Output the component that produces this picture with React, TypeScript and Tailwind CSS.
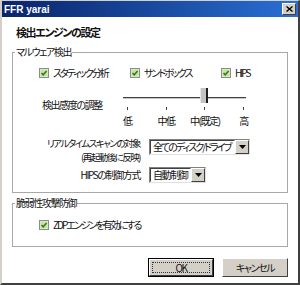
import type { ReactNode } from 'react';

const jp = "font-['Noto_Sans_CJK_JP',sans-serif] [font-feature-settings:'palt']";

function CheckBox() {
  return (
    <svg width="10" height="10" viewBox="0 0 10 10" className="shrink-0">
      <rect x="0.5" y="0.5" width="9" height="9" fill="#e4f2d4" stroke="#8c8c8c" />
      <rect x="1.5" y="1.5" width="7" height="7" fill="#c6e2a4" />
      <path d="M2.5 5 L4.2 6.8 L7.6 3" fill="none" stroke="#2e7a1c" strokeWidth="1.5" />
    </svg>
  );
}

function Check({ label, className = '' }: { label: string; className?: string }) {
  return (
    <div className={`flex items-center gap-[4px] ${className}`}>
      <CheckBox />
      <span className="leading-[12px] whitespace-nowrap tracking-[-2px]">{label}</span>
    </div>
  );
}

function Group({ title, className, children }: { title: string; className: string; children: ReactNode }) {
  return (
    <div className={`relative border border-[#a8a8a8] ${className}`}>
      <span className="absolute left-[2px] top-[-7px] bg-white px-[1px] leading-[12px] whitespace-nowrap">{title}</span>
      {children}
    </div>
  );
}

function Select({ value, className }: { value: string; className: string }) {
  return (
    <div className={`flex h-[16px] items-stretch bg-white border border-t-[#808080] border-l-[#808080] border-r-[#e0e0e0] border-b-[#e0e0e0] ${className}`}>
      <div className="flex-1 flex items-center pl-[2px] leading-[12px] whitespace-nowrap overflow-hidden border border-t-[#404040] border-l-[#404040] border-r-white border-b-white">
        {value}
      </div>
      <div className="w-[14px] flex items-center justify-center bg-[#d4d0c8] border border-t-white border-l-white border-r-[#404040] border-b-[#404040]">
        <svg width="7" height="4" viewBox="0 0 7 4">
          <path d="M0 0 H7 L3.5 4 Z" fill="#000" />
        </svg>
      </div>
    </div>
  );
}

function Button({ label, focused }: { label: string; focused?: boolean }) {
  return (
    <div className={`w-[66px] h-[19px] ${focused ? 'border border-black' : ''}`}>
      <div className="h-full bg-[#d4d0c8] border border-t-white border-l-white border-r-[#404040] border-b-[#404040] flex items-center justify-center p-[2px]">
        <div className={`w-full h-full flex items-center justify-center leading-[11px] whitespace-nowrap ${focused ? 'border border-dotted border-[#333]' : ''}`}>{label}</div>
      </div>
    </div>
  );
}

export default function App() {
  const ticks = ['低', '中低', '中(既定)', '高'];
  return (
    <div className={`w-[300px] h-[285px] bg-white flex flex-col overflow-hidden border-t border-l-2 border-r-2 border-b-2 border-t-[#d4d0c8] border-l-[#d4d0c8] border-r-[#404040] border-b-[#404040] text-[10px] tracking-[-1.4px] text-[#111] ${jp}`}>
      <div className="h-[16px] shrink-0 flex items-center justify-between pl-[2px] pr-[2px] bg-gradient-to-r from-[#0a246a] to-[#2a70d4]">
        <span className="font-['Liberation_Sans',sans-serif] tracking-normal font-bold text-[10px] text-white">FFR yarai</span>
        <div className="w-[14px] h-[12px] bg-[#d4d0c8] border border-t-white border-l-white border-r-[#404040] border-b-[#404040] flex items-center justify-center">
          <svg width="7" height="6" viewBox="0 0 7 6">
            <path d="M0.5 0.5 L6.5 5.5 M6.5 0.5 L0.5 5.5" stroke="#000" strokeWidth="1.4" />
          </svg>
        </div>
      </div>

      <div className="flex-1 flex flex-col px-[10px]">
        <h1 className="mt-[8px] pl-[4px] text-[11px] tracking-[-1.4px] font-bold leading-[14px]">検出エンジンの設定</h1>

        <Group title="マルウェア検出" className="mt-[13px] h-[141px] shrink-0">
          <div className="flex mt-[14px] pl-[26px]">
            <Check label="スタティック分析" className="w-[91px]" />
            <Check label="サンドボックス" className="w-[91px]" />
            <Check label="HIPS" />
          </div>

          <div className="flex mt-[8px]">
            <div className="w-[95px] pl-[29px] pt-[11px] leading-[14px] whitespace-nowrap">検出感度の調整</div>
            <div className="w-[155px]">
              <div className="relative h-[18px]">
                <div className="absolute left-[15px] w-[123px] top-[10px] h-[2px] border-t border-t-[#404040] border-b border-b-[#c8c8c8]" />
                <div className="absolute left-[92px] top-[1px] w-[8px] h-[15px] flex">
                  <div className="flex-1 bg-[#c4c4c4] border-l border-l-[#e8e8e8]" />
                  <div className="w-[2px] bg-[#202020]" />
                </div>
              </div>
              <div className="grid grid-cols-4">
                {ticks.map((t) => (
                  <div key={t} className="flex flex-col items-center">
                    <div className="mt-[2px] w-px h-[3px] bg-[#404040]" />
                    <div className="mt-[5px] leading-[12px] whitespace-nowrap">{t}</div>
                  </div>
                ))}
              </div>
            </div>
          </div>

          <div className="flex items-start mt-[9px]">
            <div className="w-[127px] text-right text-[9.5px] leading-[14px] whitespace-nowrap tracking-[-1.5px]">
              リアルタイムスキャンの対象
              <br />
              (再起動後に反映)
            </div>
            <Select value="全てのディスク/ドライブ" className="ml-[9px] mt-[3px] w-[101px] tracking-[-2px]" />
          </div>

          <div className="flex items-center mt-[3px]">
            <div className="w-[127px] text-right leading-[14px] whitespace-nowrap">HIPSの制御方式</div>
            <Select value="自動制御" className="ml-[9px] w-[57px]" />
          </div>
        </Group>

        <Group title="脆弱性攻撃防御" className="mt-[10px] h-[44px] shrink-0">
          <Check label="ZDPエンジンを有効にする" className="mt-[15px] ml-[26px]" />
        </Group>

        <div className="flex justify-end gap-[8px] mt-[11px]">
          <Button label="OK" focused />
          <Button label="キャンセル" />
        </div>
      </div>
    </div>
  );
}
